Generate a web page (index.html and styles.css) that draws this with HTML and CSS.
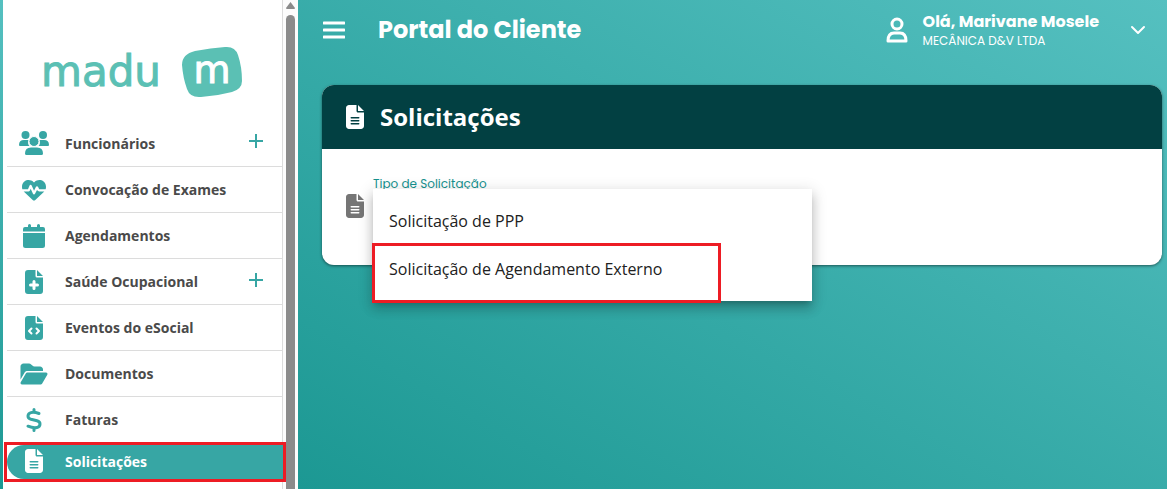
FILE: index.html
```html
<!DOCTYPE html>
<html lang="pt-BR">
<head>
    <meta charset="UTF-8">
    <meta name="viewport" content="width=device-width, initial-scale=1.0">
    <title>Portal do Cliente</title>
    <link rel="stylesheet" href="styles.css">
</head>
<body>
    <svg class="sprite" aria-hidden="true">
        <symbol id="file-lines" viewBox="0 0 384 512">
            <path d="M64 0C28.7 0 0 28.7 0 64V448c0 35.3 28.7 64 64 64H320c35.3 0 64-28.7 64-64V160H256c-17.7 0-32-14.3-32-32V0H64zM256 0V128H384L256 0zM112 256H272c8.8 0 16 7.2 16 16s-7.2 16-16 16H112c-8.8 0-16-7.2-16-16s7.2-16 16-16zm0 64H272c8.8 0 16 7.2 16 16s-7.2 16-16 16H112c-8.8 0-16-7.2-16-16s7.2-16 16-16zm0 64H272c8.8 0 16 7.2 16 16s-7.2 16-16 16H112c-8.8 0-16-7.2-16-16s7.2-16 16-16z"/>
        </symbol>
    </svg>
    <div class="page">
        <aside class="sidebar">
            <div class="menu">
                <a class="logo" href="#" aria-label="madu">
                    <span class="logo-name">madu</span>
                    <svg class="logo-badge" viewBox="0 0 62 52" width="62" height="52">
                        <path d="M14 5Q30 2 44 1Q54 0 57 9Q61 21 61 35Q61 43 51 46Q36 50 20 51Q9 52 6 43Q2 32 1 19Q1 8 14 5Z"/>
                        <text x="31" y="37" text-anchor="middle">m</text>
                    </svg>
                </a>
                <nav>
                    <ul class="nav-list">
                        <li class="nav-item">
                            <a href="#">
                                <svg class="icon" viewBox="0 0 30 24" width="30" height="24"><circle cx="6.5" cy="4" r="4"/><circle cx="24" cy="4" r="4"/><path d="M0 14Q0 9 5 9H9.5Q8.3 13 10.5 15H1Q0 15 0 14ZM30 14Q30 9 25 9H20.5Q21.7 13 19.5 15H29Q30 15 30 14ZM6 22.5Q6 16.5 12 16.5H18Q24 16.5 24 22.5Q24 24 22.5 24H7.5Q6 24 6 22.5Z"/><circle class="front" cx="15" cy="10.5" r="5"/></svg>
                                <span>Funcionários</span>
                            </a>
                            <button class="expand" aria-label="Expandir Funcionários">
                                <svg viewBox="0 0 14 14" width="14" height="14"><path d="M7 0V14M0 7H14"/></svg>
                            </button>
                        </li>
                        <li class="nav-item">
                            <a href="#">
                                <svg class="icon" viewBox="0 0 512 512" width="24" height="24"><path d="M228.3 469.1L47.6 300.4c-4.2-3.9-8.2-8.1-11.9-12.4h87c22.6 0 43-13.6 51.7-34.5l10.5-25.2 49.3 109.5c3.8 8.5 12.1 14 21.4 14.1s17.8-5 22-13.3L320 253.7l1.7 3.4c9.5 19 28.9 31 50.1 31H476.3c-3.7 4.3-7.7 8.5-11.9 12.4L283.7 469.1c-7.5 7-17.4 10.9-27.7 10.9s-20.2-3.9-27.7-10.9zM503.7 240h-132c-3 0-5.8-1.7-7.2-4.4l-23.2-46.3c-4.1-8.1-12.4-13.3-21.5-13.3s-17.4 5.1-21.5 13.3l-41.4 82.8L205.9 158.2c-3.9-8.7-12.7-14.3-22.2-14.1s-18.1 5.9-21.8 14.8l-31.8 76.3c-1.2 3-4.2 4.9-7.4 4.9H16c-2.6 0-5 .4-7.3 1.1C3 225.2 0 208.2 0 190.9v-5.8c0-69.9 50.5-129.5 119.4-141C165 36.5 211.4 51.4 244 84l12 12 12-12c32.6-32.6 79-47.5 124.6-39.9C461.5 55.6 512 115.2 512 185.1v5.8c0 16.9-2.8 33.5-8.3 49.1z"/></svg>
                                <span>Convocação de Exames</span>
                            </a>
                        </li>
                        <li class="nav-item">
                            <a href="#">
                                <svg class="icon" viewBox="0 0 22 24" width="22" height="24"><path d="M5 1.5a1.5 1.5 0 0 1 3 0V3H14V1.5a1.5 1.5 0 0 1 3 0V3H20Q22 3 22 5V7.5H0V5Q0 3 2 3H5ZM0 9H22V21.5Q22 24 19.5 24H2.5Q0 24 0 21.5Z"/></svg>
                                <span>Agendamentos</span>
                            </a>
                        </li>
                        <li class="nav-item">
                            <a href="#">
                                <svg class="icon" viewBox="0 0 18 24" width="18" height="24"><path d="M3 0H10.5V6Q10.5 7.5 12 7.5H18V21Q18 24 15 24H3Q0 24 0 21V3Q0 0 3 0ZM12 0V6H18Z"/><path class="mark plus" d="M9 11.5V18.5M5.5 15H12.5"/></svg>
                                <span>Saúde Ocupacional</span>
                            </a>
                            <button class="expand" aria-label="Expandir Saúde Ocupacional">
                                <svg viewBox="0 0 14 14" width="14" height="14"><path d="M7 0V14M0 7H14"/></svg>
                            </button>
                        </li>
                        <li class="nav-item">
                            <a href="#">
                                <svg class="icon" viewBox="0 0 18 24" width="18" height="24"><path d="M3 0H10.5V6Q10.5 7.5 12 7.5H18V21Q18 24 15 24H3Q0 24 0 21V3Q0 0 3 0ZM12 0V6H18Z"/><path class="mark" d="M6.5 12.5L4 15L6.5 17.5M11.5 12.5L14 15L11.5 17.5"/></svg>
                                <span>Eventos do eSocial</span>
                            </a>
                        </li>
                        <li class="nav-item">
                            <a href="#">
                                <svg class="icon" viewBox="0 0 576 512" width="28" height="24"><path d="M88.7 223.8L0 375.8V96C0 60.7 28.7 32 64 32H181.5c17 0 33.3 6.7 45.3 18.7l26.5 26.5c12 12 28.3 18.7 45.3 18.7H416c35.3 0 64 28.7 64 64v32H144c-22.8 0-43.8 12.1-55.3 31.8zm27.6 16.1C122.1 230 132.6 224 144 224H544c11.5 0 22 6.1 27.7 16.1s5.7 22.2-.1 32.1l-112 192C453.9 474 443.4 480 432 480H32c-11.5 0-22-6.1-27.7-16.1s-5.7-22.2 .1-32.1l112-192z"/></svg>
                                <span>Documentos</span>
                            </a>
                        </li>
                        <li class="nav-item">
                            <a href="#">
                                <svg class="icon line" viewBox="0 0 16 24" width="16" height="24"><path d="M8 1.5V4M8 20V22.5M13 5.5Q8 3.8 5 4.6Q2 5.5 2 8Q2 10.5 5 11.3L11 12.7Q14 13.5 14 16Q14 18.8 11 19.6Q7 20.3 2 18.2"/></svg>
                                <span>Faturas</span>
                            </a>
                        </li>
                        <li class="nav-item active">
                            <a href="#" aria-current="page">
                                <svg class="icon" width="18" height="24"><use href="#file-lines"/></svg>
                                <span>Solicitações</span>
                            </a>
                        </li>
                    </ul>
                </nav>
            </div>
            <div class="scrollbar">
                <svg viewBox="0 0 9 7" width="9" height="7"><path d="M4.5 0L9 6Q9 7 8 7H1Q0 7 0 6Z"/></svg>
                <div class="thumb"></div>
            </div>
        </aside>

        <div class="content">
            <header class="topbar">
                <button class="toggle" aria-label="Abrir menu">
                    <svg viewBox="0 0 22 18" width="22" height="18"><path d="M1 2H21M1 9H21M1 16H21"/></svg>
                </button>
                <h1>Portal do Cliente</h1>
                <button class="user">
                    <svg class="user-icon" viewBox="0 0 22 26" width="22" height="26"><circle cx="11" cy="7" r="5"/><path d="M2 24Q2 16 8 16H14Q20 16 20 24Z"/></svg>
                    <span class="user-text">
                        <strong>Olá, Marivane Mosele</strong>
                        <span>MECÂNICA D&amp;V LTDA</span>
                    </span>
                    <svg class="chevron" viewBox="0 0 16 10" width="16" height="10"><path d="M2 2L8 8L14 2"/></svg>
                </button>
            </header>

            <main class="card">
                <div class="card-header">
                    <svg width="18" height="24"><use href="#file-lines"/></svg>
                    <h2>Solicitações</h2>
                </div>
                <div class="card-body">
                    <svg class="field-icon" width="18" height="24"><use href="#file-lines"/></svg>
                    <div class="field">
                        <span class="field-label" id="tipo">Tipo de Solicitação</span>
                        <div class="options" role="listbox" aria-labelledby="tipo">
                            <button class="option" role="option">Solicitação de PPP</button>
                            <button class="option marked" role="option">Solicitação de Agendamento Externo</button>
                        </div>
                    </div>
                </div>
            </main>
        </div>
    </div>
</body>
</html>
```
FILE: styles.css
```css
*{
    box-sizing: border-box;
}
body{
    margin: 0;
    font-family: "Open Sans", "Noto Sans", sans-serif;
    background: linear-gradient(to bottom, #55c0c0, #1c9893);
}
h1, h2, ul{
    margin: 0;
    padding: 0;
}
a{
    text-decoration: none;
}
button{
    padding: 0;
    border: 0;
    background: none;
    color: inherit;
    font-family: inherit;
    text-align: left;
    cursor: pointer;
}
svg{
    display: block;
    flex-shrink: 0;
    fill: currentColor;
}
.sprite{
    display: none;
}
.page{
    display: flex;
    height: 100vh;
    padding-left: 3px;
    overflow: hidden;
}

/* menu lateral */
.sidebar{
    display: flex;
    flex: 0 0 295px;
    background-color: white;
}
.menu{
    flex: 1;
    padding-left: 4px;
    border-right: 1px solid #dcdcdc;
}
.logo{
    display: flex;
    align-items: center;
    gap: 20px;
    height: 120px;
    padding: 24px 0 0 34px;
    color: #5bc0b4;
}
.logo-name{
    font-family: "DejaVu Sans", sans-serif;
    font-size: 42px;
    line-height: 42px;
    -webkit-text-stroke: 1px #5bc0b4;
}
.logo-badge text{
    fill: white;
    stroke: white;
    stroke-width: 1px;
    font-family: "DejaVu Sans", sans-serif;
    font-size: 38px;
}
.nav-list{
    list-style: none;
}
.nav-item{
    display: flex;
    height: 46px;
    border-bottom: 1px solid #dcdcdc;
    color: #37a6a4;
}
.nav-item:first-child{
    height: 47px;
}
.nav-item a{
    display: flex;
    flex: 1;
    align-items: center;
    gap: 4px;
    color: inherit;
    font-size: 14px;
    font-weight: bold;
}
.nav-item a span{
    color: #4a4a4a;
}
.icon{
    width: 54px;
}
.icon .front{
    stroke: white;
    stroke-width: 1px;
}
.icon .mark{
    fill: none;
    stroke: white;
    stroke-width: 2px;
    stroke-linecap: round;
    stroke-linejoin: round;
}
.icon .plus{
    stroke-width: 3px;
}
.icon.line{
    fill: none;
    stroke: currentColor;
    stroke-width: 3px;
    stroke-linecap: round;
}
.expand{
    padding: 0 19px 4px 0;
}
.expand path{
    fill: none;
    stroke: currentColor;
    stroke-width: 2px;
}
.nav-item.active{
    position: relative;
    height: 34px;
    margin: 2px -1px 0 0;
    border: 0;
    outline: 3px solid #ed1c24;
}
.nav-item.active a{
    padding-bottom: 2px;
    border-radius: 17px 0 0 17px;
    background-color: #37a6a4;
}
.nav-item.active span, .nav-item.active .icon{
    color: white;
}
.scrollbar{
    display: flex;
    flex-direction: column;
    align-items: center;
    gap: 6px;
    width: 15px;
    padding-top: 2px;
    background-color: #fcfcfc;
    color: #8b8b8b;
}
.thumb{
    flex: 1;
    width: 9px;
    border-radius: 5px 5px 0 0;
    background-color: #8b8b8b;
}

/* conteudo */
.content{
    flex: 1;
    padding: 0 5px 0 24px;
    background: linear-gradient(to top right, #1c9893, #55c0c0);
}
.topbar{
    display: flex;
    align-items: center;
    height: 85px;
    padding: 0 16px 26px 1px;
    color: white;
    font-family: Poppins, Inter, sans-serif;
}
.toggle path, .user-icon, .chevron{
    fill: none;
    stroke: currentColor;
    stroke-width: 3px;
    stroke-linecap: round;
    stroke-linejoin: round;
}
.topbar h1{
    margin-left: 33px;
    font-size: 24px;
    line-height: 32px;
}
.user{
    display: flex;
    align-items: center;
    gap: 15px;
    margin-left: auto;
}
.chevron{
    margin-left: 16px;
}
.user .user-icon{
    stroke-width: 3px;
}
.user .chevron{
    stroke-width: 2px;
}
.user-text{
    display: flex;
    flex-direction: column;
    padding-top: 2px;
    font-size: 12px;
    line-height: 18px;
}
.user-text strong{
    font-size: 16px;
    line-height: 20px;
}
.card{
    border-radius: 12px;
    background-color: white;
    box-shadow: 0 1px 3px rgba(0, 0, 0, .5);
}
.card-header{
    display: flex;
    align-items: center;
    gap: 16px;
    height: 64px;
    padding-left: 24px;
    border-radius: 12px 12px 0 0;
    background-color: #024042;
    color: white;
}
.card-header h2{
    font-size: 24px;
    line-height: 32px;
}
.card-body{
    display: flex;
    gap: 9px;
    height: 116px;
    padding: 27px 24px 0 24px;
}
.field-icon{
    margin-top: 18px;
    color: #757575;
}
.field{
    position: relative;
    flex: 1;
}
.field-label{
    display: block;
    color: #16918e;
    font-family: Poppins, Inter, sans-serif;
    font-size: 12px;
    line-height: 16px;
}
.options{
    position: absolute;
    top: 13px;
    left: 0;
    width: 439px;
    padding: 8px 0;
    background-color: white;
    box-shadow: 0 5px 5px -3px rgba(0, 0, 0, .2), 0 8px 10px 1px rgba(0, 0, 0, .14), 0 3px 14px 2px rgba(0, 0, 0, .12);
}
.option{
    display: block;
    width: 100%;
    height: 48px;
    padding: 0 16px;
    color: #212121;
    font-size: 16px;
}
.marked{
    position: relative;
}
/* moldura de destaque sobre a opcao */
.marked::after{
    content: "";
    position: absolute;
    top: -2px;
    right: 91px;
    bottom: -10px;
    left: -1px;
    border: 3px solid #ed1c24;
}
```
